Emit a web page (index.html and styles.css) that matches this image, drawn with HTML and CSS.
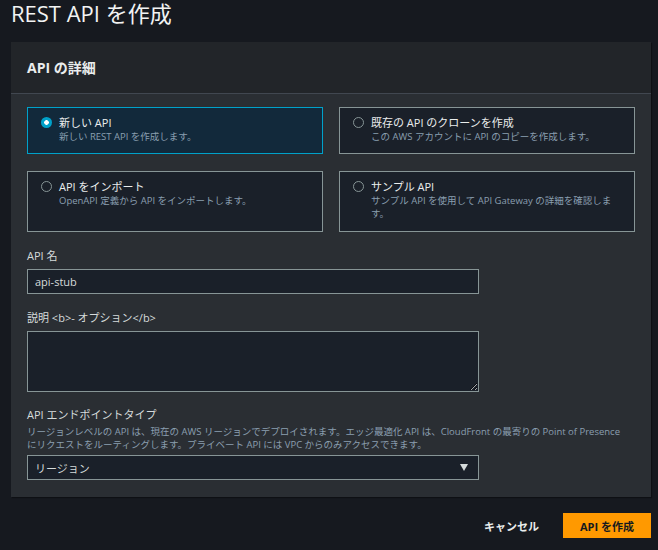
FILE: index.html
```html
<!DOCTYPE html>
<html lang="ja">
<head>
<meta charset="utf-8">
<title>REST API を作成</title>
<link rel="stylesheet" href="styles.css">
</head>
<body>
<div class="page">
  <h1 class="title">REST API を作成</h1>
  <section class="panel">
    <header class="panel-head"><h2>API の詳細</h2></header>
    <div class="panel-body">
      <div class="choices">
        <label class="choice selected">
          <span class="radio on"></span>
          <span class="choice-text">
            <span class="choice-title">新しい API</span>
            <span class="choice-desc">新しい REST API を作成します。</span>
          </span>
        </label>
        <label class="choice">
          <span class="radio"></span>
          <span class="choice-text">
            <span class="choice-title">既存の API のクローンを作成</span>
            <span class="choice-desc">この AWS アカウントに API のコピーを作成します。</span>
          </span>
        </label>
        <label class="choice">
          <span class="radio"></span>
          <span class="choice-text">
            <span class="choice-title">API をインポート</span>
            <span class="choice-desc">OpenAPI 定義から API をインポートします。</span>
          </span>
        </label>
        <label class="choice">
          <span class="radio"></span>
          <span class="choice-text">
            <span class="choice-title">サンプル API</span>
            <span class="choice-desc">サンプル API を使用して API Gateway の詳細を確認します。</span>
          </span>
        </label>
      </div>

      <div class="field">
        <div class="label">API 名</div>
        <input class="input" type="text" value="api-stub">
      </div>

      <div class="field">
        <div class="label">説明 &lt;b&gt;- オプション&lt;/b&gt;</div>
        <textarea class="input textarea"></textarea>
      </div>

      <div class="field field-tight">
        <div class="label">API エンドポイントタイプ</div>
        <div class="hint">リージョンレベルの API は、現在の AWS リージョンでデプロイされます。エッジ最適化 API は、CloudFront の最寄りの Point of Presence<br>にリクエストをルーティングします。プライベート API には VPC からのみアクセスできます。</div>
        <div class="select-wrap">
          <div class="input select">リージョン</div>
          <svg class="arrow" width="8" height="7" viewBox="0 0 8 7"><path d="M0 0H8L4 7Z" fill="#d5dbdb"/></svg>
        </div>
      </div>
    </div>
  </section>
  <div class="actions">
    <button class="btn-link" type="button">キャンセル</button>
    <button class="btn-primary" type="button">API を作成</button>
  </div>
</div>
</body>
</html>
```

FILE: styles.css
```css
body {
  margin: 0;
  background: #16191f;
  font-family: "Open Sans", "Noto Sans CJK JP", sans-serif;
  color: #d5dbdb;
}

.page {
  padding: 0 7px 0 11px;
}

.title {
  margin: 0 0 16px;
  padding-top: 1px;
  font-size: 22px;
  font-weight: 400;
  line-height: 25px;
  color: #f2f3f3;
}

.panel {
  background: #2a2e33;
  box-shadow: 1px 1px 1px rgba(0, 0, 0, 0.35);
}

.panel-head {
  height: 51px;
  display: flex;
  align-items: center;
  padding: 0 16px;
  background: #222529;
  border-bottom: 1px solid #414750;
}

.panel-head h2 {
  margin: 0;
  font-size: 14px;
  font-weight: 700;
  line-height: 18px;
  color: #eaeded;
}

.panel-body {
  padding: 13px 16px 17px;
}

.choices {
  display: grid;
  grid-template-columns: 1fr 1fr;
  grid-template-rows: 47px 61px;
  gap: 17px 16px;
}

.choice {
  display: flex;
  align-items: flex-start;
  gap: 7px;
  padding: 7px 16px 10px 13px;
  border: 1px solid #879596;
  background: #1a2029;
}

.choice.selected {
  border-color: #00a1c9;
  background: #12293b;
}

.radio {
  flex: none;
  width: 11px;
  height: 11px;
  margin-top: 2px;
  box-sizing: border-box;
  border-radius: 50%;
  border: 1.5px solid #879596;
}

.radio.on {
  border: none;
  background: radial-gradient(circle, #ffffff 0 2px, #00a1c9 2.6px);
}

.choice-text {
  display: flex;
  flex-direction: column;
}

.choice-title {
  font-size: 11px;
  line-height: 15px;
  color: #eaeded;
}

.choice-desc {
  font-size: 9.5px;
  line-height: 13px;
  color: #8a9fb0;
}

.field {
  margin-top: 16px;
}

.field-tight {
  margin-top: 15px;
}

.label {
  font-size: 11px;
  line-height: 15px;
  margin-bottom: 6px;
  color: #d5dbdb;
}

.field-tight .label {
  margin-bottom: 0;
}

.hint {
  margin: 3px 0 4px;
  font-size: 9.5px;
  line-height: 13px;
  color: #8a9fb0;
  white-space: nowrap;
}

.input {
  display: block;
  box-sizing: border-box;
  width: 452px;
  height: 25px;
  margin: 0;
  padding: 0 7px;
  background: #1a2029;
  border: 1px solid #879596;
  border-radius: 0;
  color: #d5dbdb;
  font: 11px "Open Sans", "Noto Sans CJK JP", sans-serif;
  outline: none;
}

.textarea {
  height: 61px;
  padding: 4px 7px;
}

.select-wrap {
  position: relative;
  width: 452px;
}

.select {
  display: flex;
  align-items: center;
  width: 100%;
}

.arrow {
  position: absolute;
  right: 11px;
  top: 9px;
}

.actions {
  display: flex;
  justify-content: flex-end;
  align-items: center;
  gap: 8px;
  margin-top: 16px;
}

.btn-link,
.btn-primary {
  height: 25px;
  border: 0;
  border-radius: 0;
  font: 700 11px "Open Sans", "Noto Sans CJK JP", sans-serif;
  cursor: pointer;
}

.btn-link {
  padding: 0 16px;
  background: none;
  color: #eaeded;
}

.btn-primary {
  padding: 0 17px;
  background: #ff9900;
  color: #16191f;
}
```
